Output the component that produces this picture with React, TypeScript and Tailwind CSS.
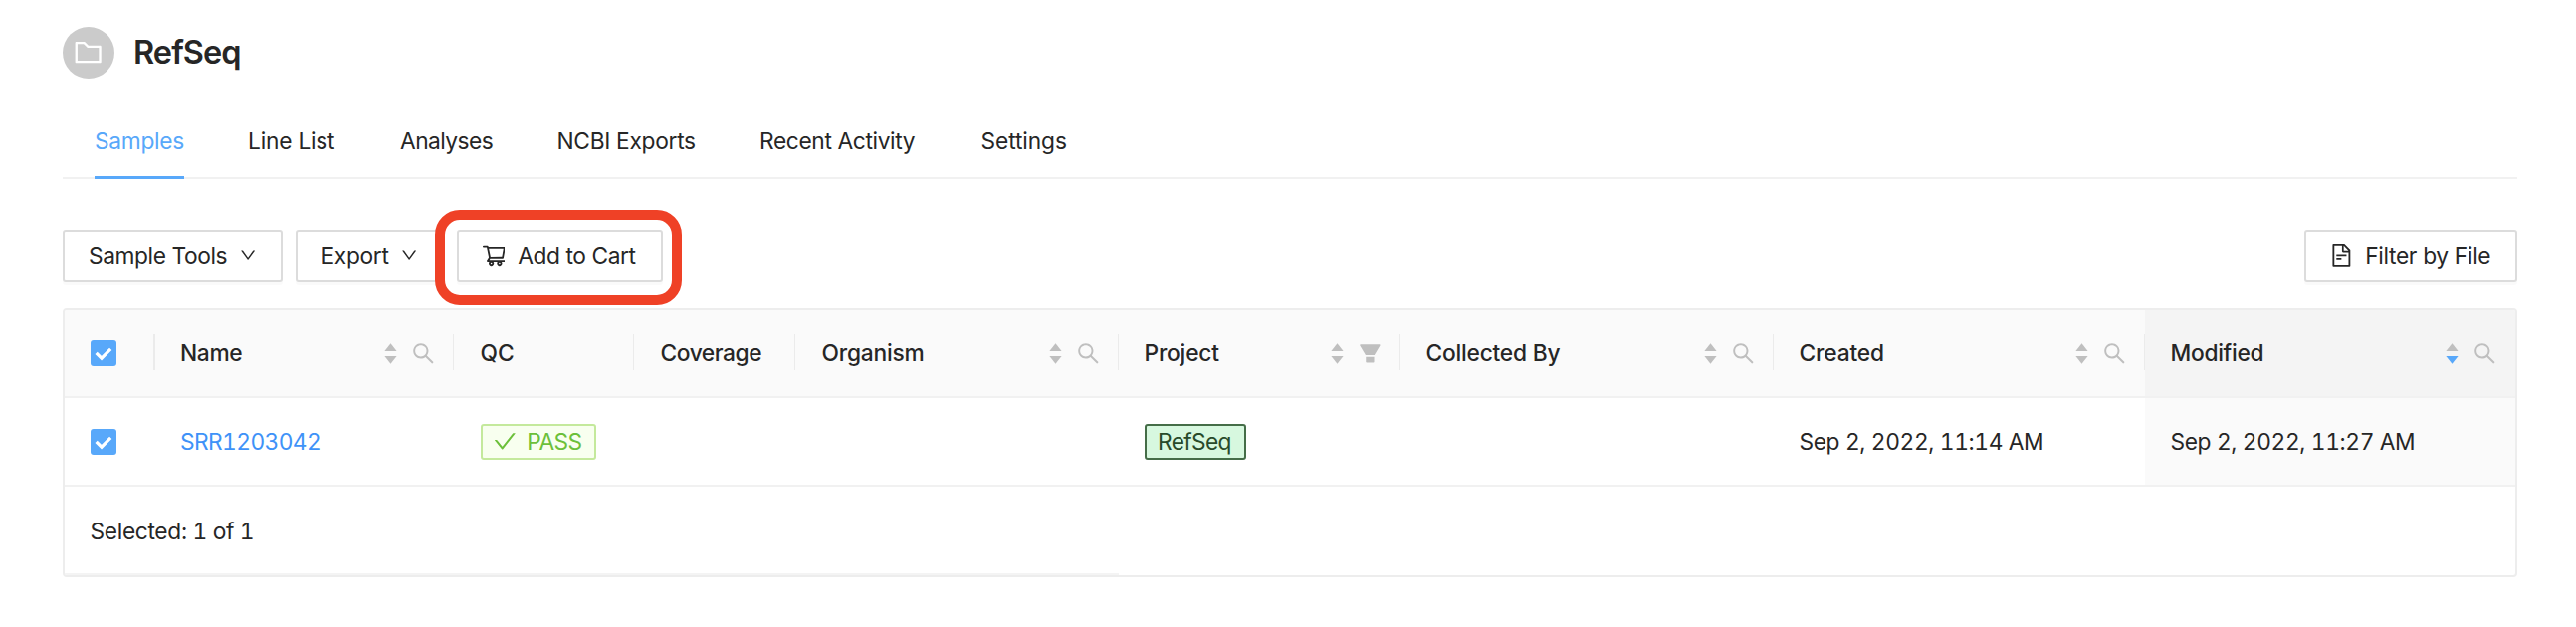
import React from "react";
import {
  AiFillFilter,
  AiOutlineCheck,
  AiOutlineDown,
  AiOutlineFileText,
  AiOutlineFolder,
  AiOutlineSearch,
  AiOutlineShoppingCart,
} from "react-icons/ai";

const ICON_BOX = "64 64 896 896";

const TABS = [
  { label: "Samples", cls: "w-[90px] tracking-[-0.28px] text-[#58a8fa]", active: true },
  { label: "Line List", cls: "w-[89px] tracking-[-0.22px]" },
  { label: "Analyses", cls: "w-[93.5px] tracking-[-0.55px]" },
  { label: "NCBI Exports", cls: "w-[139.5px] tracking-[-0.31px]" },
  { label: "Recent Activity", cls: "w-[158.5px] tracking-[-0.37px]" },
  { label: "Settings", cls: "w-[87px] tracking-[-0.1px]" },
];

type Column = {
  title: string;
  cls: string;
  sortable?: boolean;
  sortedDown?: boolean;
  tool?: "search" | "filter";
};

const COLUMNS: Column[] = [
  { title: "Name", cls: "tracking-[-0.34px]", sortable: true, tool: "search" },
  { title: "QC", cls: "pl-px tracking-[0px]" },
  { title: "Coverage", cls: "pl-px tracking-[-0.42px]" },
  { title: "Organism", cls: "pl-px tracking-[-0.2px]", sortable: true, tool: "search" },
  { title: "Project", cls: "tracking-[-0.2px]", sortable: true, tool: "filter" },
  { title: "Collected By", cls: "tracking-[-0.22px]", sortable: true, tool: "search" },
  { title: "Created", cls: "tracking-[-0.14px]", sortable: true, tool: "search" },
  { title: "Modified", cls: "tracking-[-0.3px]", sortable: true, sortedDown: true, tool: "search" },
];

const GRID = "grid grid-cols-[90.5px_300.5px_181px_162px_325px_283px_375px_373px_372px]";
const BUTTON =
  "flex h-[52px] items-center rounded-[3px] border-2 border-[#dcdcdc] bg-white px-6 pb-px whitespace-nowrap shadow-[0_3px_0_rgba(0,0,0,0.018)]";

function Checkbox() {
  return (
    <span className="flex h-[26px] w-[26px] items-center justify-center rounded-[3px] bg-[#58a8fa]">
      <svg width="26" height="26" viewBox="0 0 26 26" fill="none">
        <path d="M5.6 12.9 L11 18.2 L20.2 8.8" stroke="#fff" strokeWidth="3.3" />
      </svg>
    </span>
  );
}

function Sorter({ down }: { down?: boolean }) {
  return (
    <svg width="13" height="21" viewBox="0 0 13 21" className="mt-px">
      <path d="M6.5 0.2 L12.6 7.9 H0.4 Z" fill="#bfbfbf" />
      <path d="M6.5 20.8 L12.6 13.1 H0.4 Z" fill={down ? "#58a8fa" : "#bfbfbf"} />
    </svg>
  );
}

function HeaderCell({ col }: { col: Column }) {
  const last = col.title === "Modified";
  return (
    <div
      className={
        "relative flex items-center border-b-2 border-[#f1f1f1] pt-px pr-[19px] pl-[25.5px] font-medium " +
        (last ? "bg-[#f4f4f4]" : "bg-[#fafafa]")
      }
    >
      <span className={"flex-1 " + col.cls}>{col.title}</span>
      {col.sortable && <Sorter down={col.sortedDown} />}
      {col.tool === "search" && (
        <AiOutlineSearch viewBox={ICON_BOX} size={22.75} className="ml-[15px] text-[#bfbfbf]" />
      )}
      {col.tool === "filter" && (
        <AiFillFilter viewBox={ICON_BOX} size={22.75} className="ml-[15px] text-[#bfbfbf]" />
      )}
      {!last && <i className="absolute top-[25px] right-0 h-9 w-[1.5px] bg-[#ebebeb]" />}
    </div>
  );
}

export default function App() {
  return (
    <div className="h-[630px] w-[2588px] bg-white pt-[27px] pr-[59px] pl-[63px] font-['Inter',sans-serif] text-[22.75px] leading-9 text-[#262626]">
      <header className="flex h-[52px] items-center">
        <span className="flex h-[52px] w-[52px] items-center justify-center rounded-full bg-[#cbcbcb]">
          <AiOutlineFolder viewBox={ICON_BOX} size={29.25} className="text-white" />
        </span>
        <h1 className="ml-[19px] text-[32.5px] font-semibold tracking-[-0.94px]">RefSeq</h1>
      </header>

      <nav className="mt-[26px] flex h-[75px] w-[2466px] items-center gap-16 border-b-2 border-[#f1f1f1] pl-8">
        {TABS.map((t) => (
          <div key={t.label} className={"relative flex h-full items-center whitespace-nowrap " + t.cls}>
            {t.label}
            {t.active && <i className="absolute -bottom-0.5 left-0 h-[3.5px] w-full bg-[#58a8fa]" />}
          </div>
        ))}
      </nav>

      <div className="mt-[51px] flex w-[2466px] gap-[13px]">
        <button className={BUTTON + " w-[220.5px] justify-between tracking-[-0.41px]"}>
          Sample Tools
          <AiOutlineDown viewBox={ICON_BOX} size={16.25} />
        </button>
        <button className={BUTTON + " w-[149px] justify-between tracking-[-0.34px]"}>
          Export
          <AiOutlineDown viewBox={ICON_BOX} size={16.25} />
        </button>
        <div className="relative">
          <button className={BUTTON + " w-[207px] tracking-[-0.42px]"}>
            <AiOutlineShoppingCart viewBox={ICON_BOX} size={22.75} className="mr-[13px]" />
            Add to Cart
          </button>
          <div className="absolute -top-5 -left-[21.5px] h-[95px] w-[248px] rounded-[25px] border-10 border-[#ef4126]" />
        </div>
        <button className={BUTTON + " ml-auto w-[214px] tracking-[-0.33px]"}>
          <AiOutlineFileText viewBox={ICON_BOX} size={22.75} className="mr-[12.5px]" />
          Filter by File
        </button>
      </div>

      <section className="relative mt-[26px] h-[271px] w-[2466px] overflow-hidden rounded-[4px] border-2 border-[#ededed] bg-white">
        <div className={GRID + " h-[89px]"}>
          <div className="relative flex items-center border-b-2 border-[#f1f1f1] bg-[#fafafa] pl-[25.5px]">
            <Checkbox />
            <i className="absolute top-[25px] right-0 h-9 w-[1.5px] bg-[#ebebeb]" />
          </div>
          {COLUMNS.map((c) => (
            <HeaderCell key={c.title} col={c} />
          ))}
        </div>
        <div className={GRID + " h-[89px] border-b-2 border-[#f1f1f1] tabular-nums"}>
          <div className="flex items-center pl-[25.5px]">
            <Checkbox />
          </div>
          <div className="flex items-center pt-px pl-[25.5px] tracking-[-0.6px] text-[#3e92f8]">SRR1203042</div>
          <div className="flex items-center pl-[27px]">
            <span className="flex h-9 w-[116px] items-center rounded-[3px] border-2 border-[#c4e99c] bg-[#f8ffef] pl-[10.5px] tracking-[-0.62px] text-[#6cc03a]">
              <AiOutlineCheck viewBox={ICON_BOX} size={22.75} className="mr-[11px]" />
              PASS
            </span>
          </div>
          <div />
          <div />
          <div className="flex items-center pl-[26px]">
            <span className="flex h-9 w-[101.5px] items-center rounded-[3px] border-2 border-[#456d48] bg-[#d7f8df] pl-[11px] tracking-[-0.65px] text-[#284a2a]">
              RefSeq
            </span>
          </div>
          <div />
          <div className="flex items-center pt-px pl-[25.5px] tracking-[-0.37px]">Sep 2, 2022, 11:14 AM</div>
          <div className="flex items-center bg-[#fafafa] pt-px pl-[25.5px] tracking-[-0.37px]">
            Sep 2, 2022, 11:27 AM
          </div>
        </div>
        <footer className="flex h-[89px] items-center pl-[25.5px] tracking-[-0.33px] tabular-nums">
          Selected: 1 of 1
        </footer>
        <i className="absolute bottom-0 left-0 h-0.5 w-[1059px] bg-[#f4f4f4]" />
      </section>
    </div>
  );
}
